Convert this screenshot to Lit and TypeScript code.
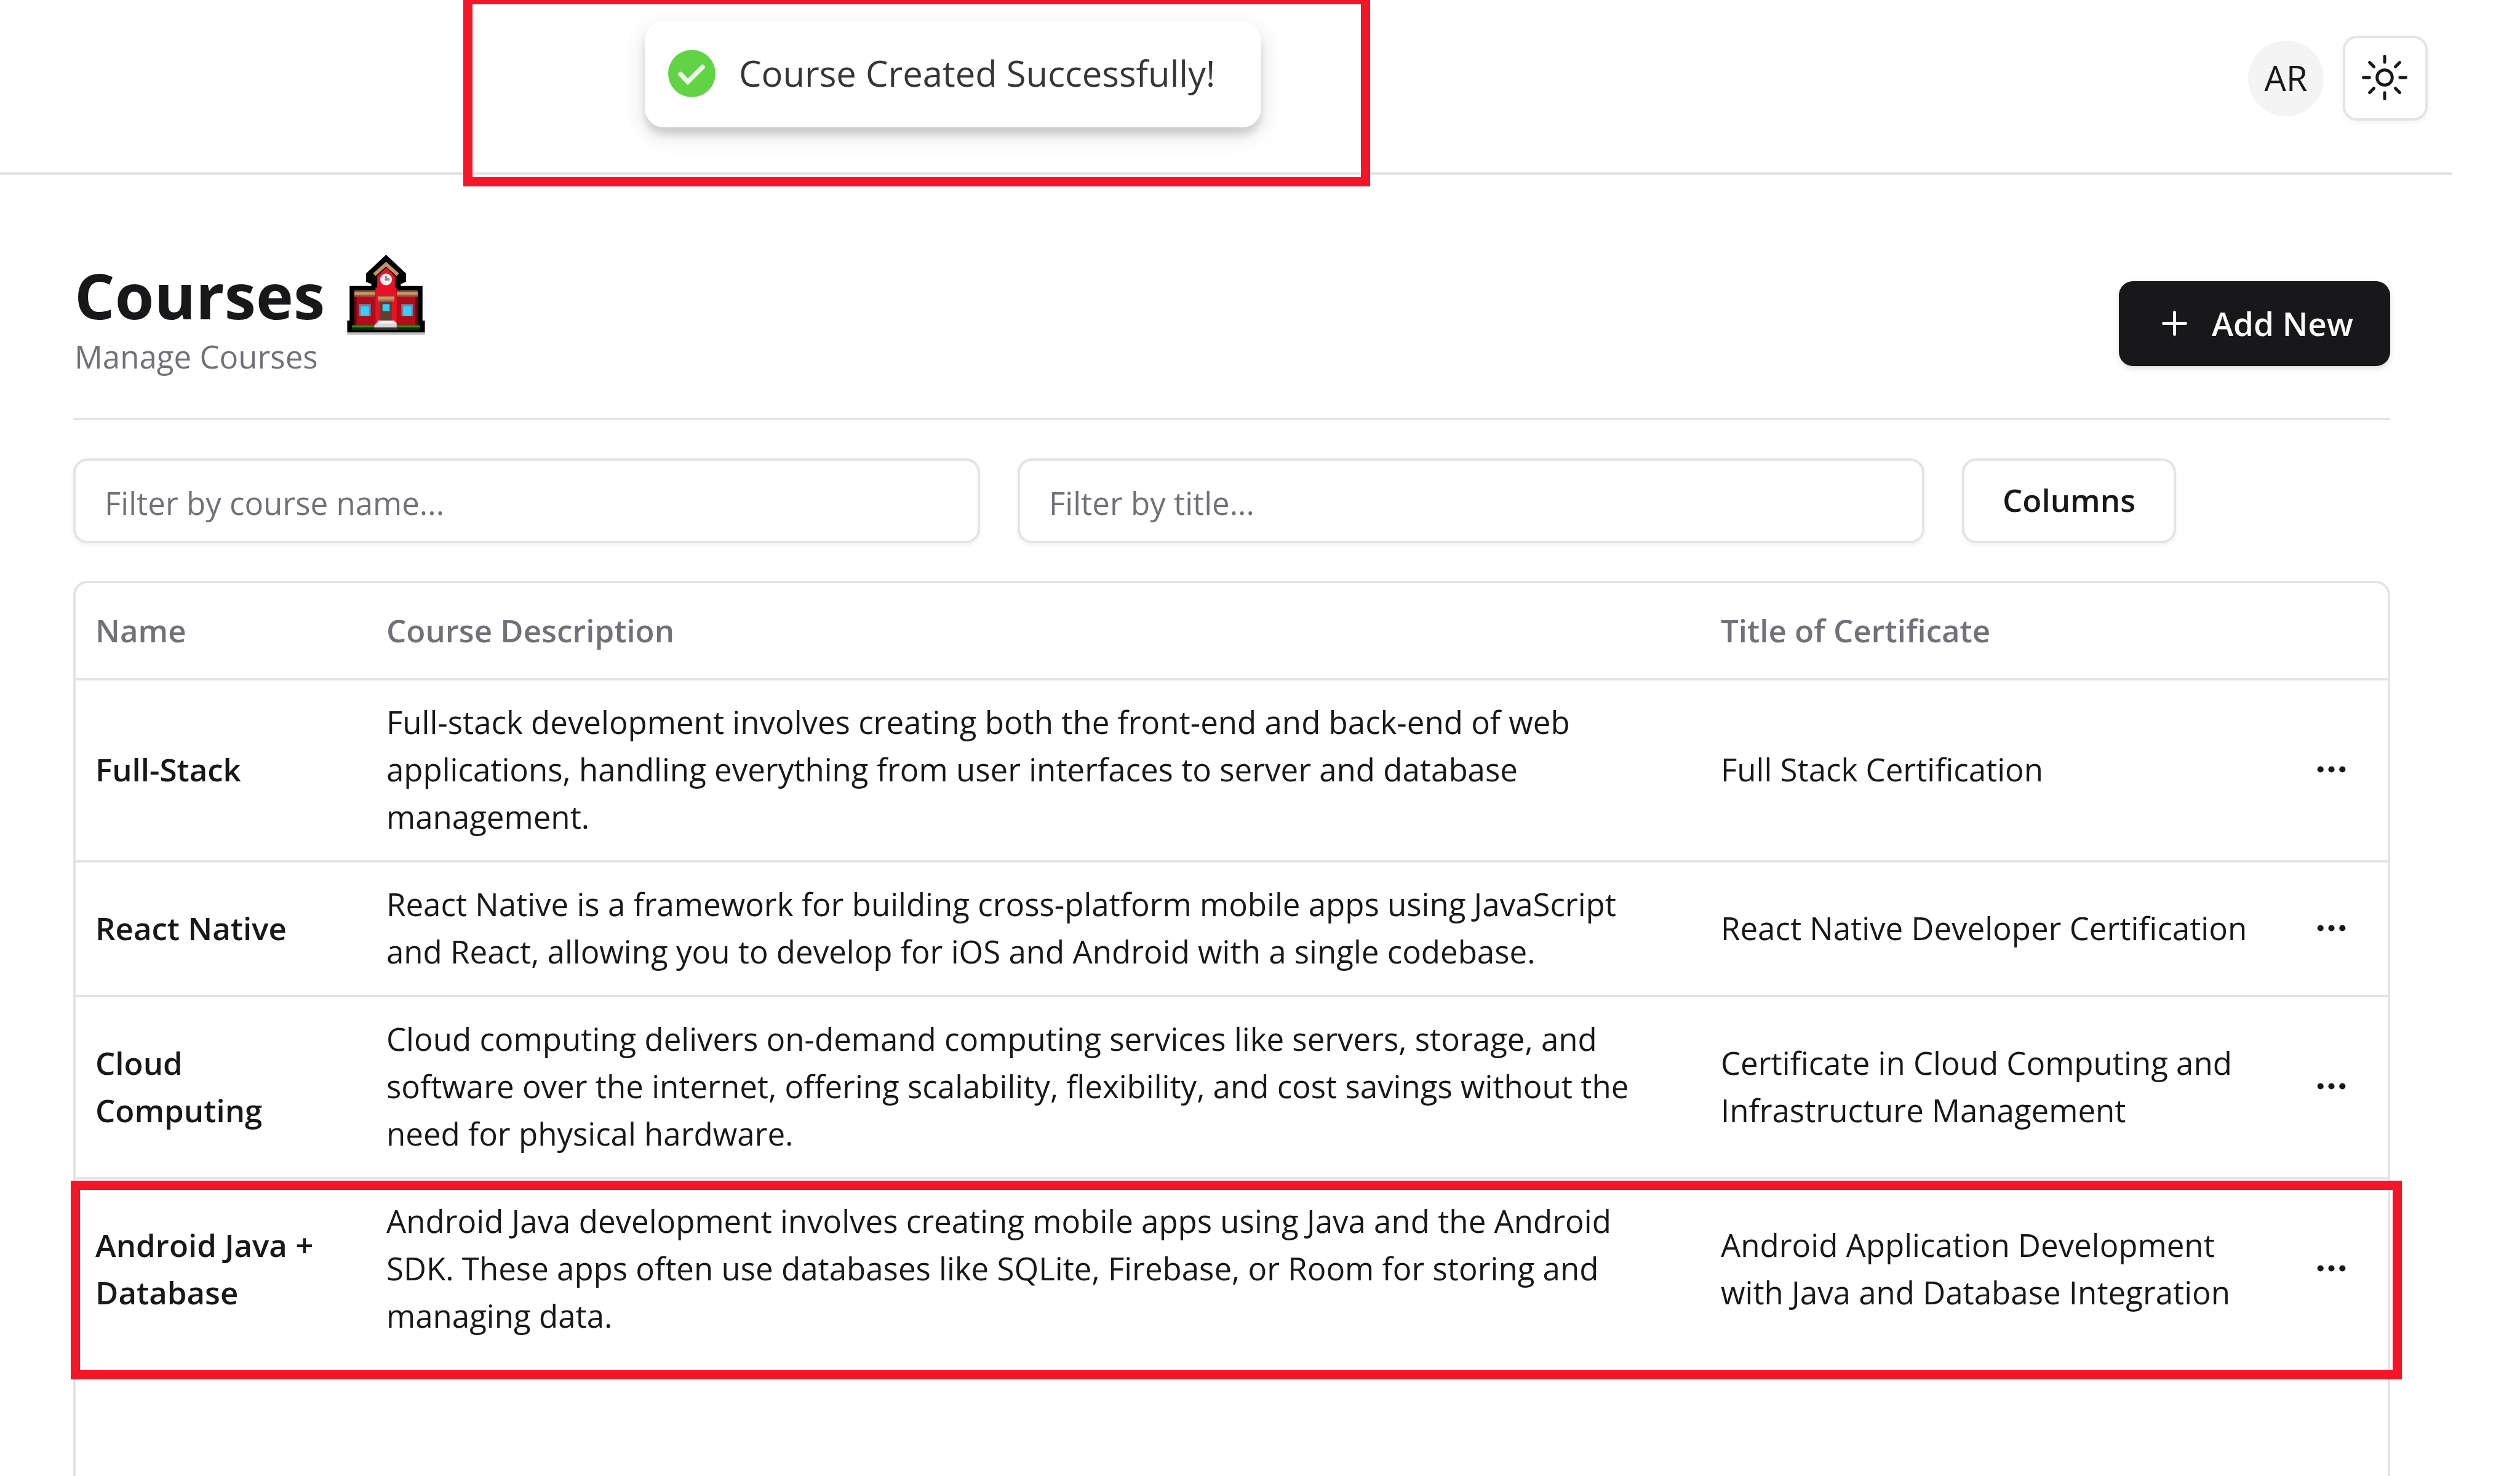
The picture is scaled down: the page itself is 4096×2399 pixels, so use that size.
import { LitElement, html, css, svg } from 'lit';
import { customElement, state } from 'lit/decorators.js';

interface Course {
  name: string;
  description: string;
  certificate: string;
}

const COURSES: Course[] = [
  {
    name: 'Full-Stack',
    description:
      'Full-stack development involves creating both the front-end and back-end of web applications, handling everything from user interfaces to server and database management.',
    certificate: 'Full Stack Certification',
  },
  {
    name: 'React Native',
    description:
      'React Native is a framework for building cross-platform mobile apps using JavaScript and React, allowing you to develop for iOS and Android with a single codebase.',
    certificate: 'React Native Developer Certification',
  },
  {
    name: 'Cloud Computing',
    description:
      'Cloud computing delivers on-demand computing services like servers, storage, and software over the internet, offering scalability, flexibility, and cost savings without the need for physical hardware.',
    certificate: 'Certificate in Cloud Computing and Infrastructure Management',
  },
  {
    name: 'Android Java + Database',
    description:
      'Android Java development involves creating mobile apps using Java and the Android SDK. These apps often use databases like SQLite, Firebase, or Room for storing and managing data.',
    certificate: 'Android Application Development with Java and Database Integration',
  },
];

const RAYS = [0, 45, 90, 135, 180, 225, 270, 315];

const sunIcon = html`<svg class="sun" viewBox="0 0 15 15" fill="none" stroke="currentColor" aria-hidden="true">
  <circle cx="7.5" cy="7.5" r="2.5" />
  ${RAYS.map(
    (angle) => svg`<path stroke-linecap="round" transform=${`rotate(${angle} 7.5 7.5)`} d="M7.5 0.5v2" />`,
  )}
</svg>`;

const plusIcon = html`<svg class="plus" viewBox="0 0 24 24" fill="none" stroke="currentColor" stroke-width="2" stroke-linecap="round" aria-hidden="true">
  <path d="M5 12h14M12 5v14" />
</svg>`;

const dotsIcon = html`<svg class="dots" viewBox="0 0 24 24" fill="currentColor" aria-hidden="true">
  <circle cx="5" cy="12" r="2" /><circle cx="12" cy="12" r="2" /><circle cx="19" cy="12" r="2" />
</svg>`;

const checkIcon = html`<svg class="check" viewBox="0 0 80 80" fill="none" aria-hidden="true">
  <circle cx="40" cy="40" r="40" fill="#61d345" />
  <path d="M21 41 33 54 58 29" stroke="#fff" stroke-opacity="0.88" stroke-width="8" stroke-linecap="round" />
</svg>`;

const schoolIcon = html`<svg class="school" viewBox="0 0 132 136" role="img" aria-label="School">
  <rect y="132" width="132" height="4" fill="#bfbfbf" />
  <path d="M66 0 100 32V46L91 50V53H128V112H132V132H0V112H4V53H41V50L32 46V32Z" fill="#000" />
  <path d="M12 62H48V68H12ZM84 62H120V68H84Z" fill="#c0956a" />
  <path d="M12 60H48V63H12ZM84 60H120V63H84Z" fill="#5f4a32" />
  <path d="M12 68H48V72H12ZM84 68H120V72H84Z" fill="#b84a3c" />
  <path d="M12 72H120V120H12Z" fill="#b00d1a" />
  <path d="M12 72H16V120H12ZM116 72H120V120H116Z" fill="#6a0811" />
  <path d="M66 22 81 36V56H84V118H48V56H51V36Z" fill="#e81224" />
  <path d="M46 34 66 16 86 34" fill="none" stroke="#c0956a" stroke-width="6" />
  <circle cx="66" cy="42" r="10" fill="#f2f2f2" />
  <path d="M64 36H68V40H72V44H64Z" fill="#8d8d8d" />
  <path d="M52 70H80V80H52Z" fill="#b0684a" />
  <path d="M52 72H80V76H52Z" fill="#c8966c" />
  <path d="M56 80H76V112H56Z" fill="#653d2f" />
  <path d="M60 84H72V96H60Z" fill="#30cdf5" />
  <path d="M20 84H40V104H20ZM92 84H112V104H92Z" fill="#7b7c9c" />
  <path d="M23 88H37V104H23ZM95 88H109V104H95Z" fill="#30d2fa" />
  <path d="M8 120H124V124H8Z" fill="#2b930d" />
  <path d="M8 124H124V128H8Z" fill="#04310a" />
  <path d="M52 112H80L84 116V124H46V120L52 114Z" fill="#d8d8d8" />
  <path d="M52 112H80V117H52Z" fill="#f1f1f1" />
  <path d="M46 124H86V128H46Z" fill="#333" />
</svg>`;

@customElement('app-root')
export class AppRoot extends LitElement {
  static styles = css`
    :host {
      display: block;
      color: #18181b;
      background: #fff;
      font-family: 'Open Sans', 'Noto Sans', sans-serif;
      font-size: 51px;
      line-height: 77px;
    }
    *,
    *::before {
      box-sizing: border-box;
    }
    button,
    input {
      margin: 0;
      font: inherit;
      color: inherit;
    }
    button {
      cursor: pointer;
    }
    svg {
      display: block;
      flex: none;
    }
    .page {
      position: relative;
      display: flex;
      flex-direction: column;
      height: 100vh;
      overflow: hidden;
      padding-right: 111px;
    }
    .topbar {
      flex: none;
      display: flex;
      align-items: flex-start;
      justify-content: flex-end;
      gap: 31px;
      height: 284px;
      padding: 58px 39px 0 0;
      border-bottom: 4px solid #e4e4e7;
    }
    .avatar {
      display: grid;
      place-items: center;
      width: 123px;
      height: 123px;
      margin-top: 8px;
      padding: 0 0 3px;
      border: 0;
      border-radius: 50%;
      background: #f4f4f5;
      font-size: 56px;
    }
    .outline {
      height: 138px;
      border: 4px solid #e4e4e7;
      border-radius: 23px;
      background: #fff;
      box-shadow: 0 4px 8px rgba(0, 0, 0, 0.05);
    }
    .theme {
      display: grid;
      place-items: center;
      width: 138px;
      padding: 0 2px 2px 0;
    }
    .sun {
      width: 74px;
      height: 74px;
    }
    .main {
      flex: 1;
      min-height: 0;
      display: flex;
      flex-direction: column;
      padding: 130px 100px 0 119px;
    }
    .heading {
      display: flex;
      align-items: center;
      justify-content: space-between;
      padding-bottom: 42px;
      border-bottom: 4px solid #e4e4e7;
    }
    .titles {
      padding: 0 0 22px 2px;
    }
    .title {
      display: flex;
      align-items: center;
      gap: 36px;
      margin: 0;
      font-size: 103px;
      line-height: 126px;
      font-weight: 700;
    }
    .school {
      width: 127px;
      height: 130px;
    }
    .subtitle {
      margin: 0;
      line-height: 71px;
      color: #71717a;
    }
    .add {
      display: flex;
      align-items: center;
      gap: 30px;
      height: 138px;
      padding: 0 60px;
      border: 0;
      border-radius: 23px;
      background: #18181b;
      color: #fafafa;
      font-size: 53px;
      font-weight: 600;
      box-shadow: 0 4px 12px rgba(0, 0, 0, 0.1), 0 4px 8px -4px rgba(0, 0, 0, 0.1);
    }
    .plus,
    .dots {
      width: 61px;
      height: 61px;
    }
    .filters {
      display: flex;
      gap: 61px;
      padding: 62px 0 61px;
    }
    .filter {
      flex: 0 1 1474px;
      min-width: 0;
      padding: 6px 47px 0;
    }
    .filter::placeholder {
      color: #71717a;
      opacity: 1;
    }
    .columns {
      padding: 0 62px 3px;
      font-weight: 600;
    }
    .card {
      flex: 1;
      min-height: 0;
      border: 4px solid #e4e4e7;
      border-bottom: 0;
      border-radius: 23px 23px 0 0;
    }
    .table {
      width: 100%;
      table-layout: fixed;
      border-collapse: separate;
      border-spacing: 0;
    }
    .name-col {
      width: 473px;
    }
    .cert-col {
      width: 931px;
    }
    .action-col {
      width: 185px;
    }
    .th {
      height: 158px;
      padding: 0 28px 2px 32px;
      border-bottom: 4px solid #e4e4e7;
      text-align: left;
      font-weight: 600;
      color: #71717a;
    }
    .td {
      padding: 29px 28px 32px 32px;
      border-bottom: 4px solid #e4e4e7;
      text-align: left;
      font-weight: 400;
      vertical-align: middle;
    }
    .name {
      font-weight: 600;
    }
    .description {
      padding-right: 64px;
    }
    .row:last-child .td {
      border-bottom: 0;
    }
    .more {
      display: grid;
      place-items: center;
      width: 123px;
      height: 123px;
      padding: 0;
      border: 0;
      border-radius: 23px;
      background: none;
    }
    .mark {
      position: absolute;
      border: 15px solid #f51428;
      pointer-events: none;
    }
    .mark-toast {
      left: 753px;
      top: -8px;
      width: 1474px;
      height: 311px;
    }
    .mark-row {
      left: 115px;
      right: 192px;
      top: 1919px;
      height: 323px;
    }
    .toast {
      position: absolute;
      left: 1048px;
      top: 35px;
      display: flex;
      align-items: center;
      padding: 29px 38px 33px;
      border-radius: 31px;
      background: #fff;
      color: #363636;
      font-size: 58px;
      line-height: 80px;
      box-shadow: 0 12px 38px rgba(0, 0, 0, 0.13), 0 12px 12px rgba(0, 0, 0, 0.12);
    }
    .check {
      width: 77px;
      height: 77px;
    }
    .message {
      margin: 15px 37px 15px 38px;
      white-space: nowrap;
    }
  `;

  @state() private nameFilter = '';
  @state() private titleFilter = '';

  private get rows() {
    const name = this.nameFilter.toLowerCase();
    const title = this.titleFilter.toLowerCase();
    return COURSES.filter(
      (c) => c.name.toLowerCase().includes(name) && c.certificate.toLowerCase().includes(title),
    );
  }

  render() {
    return html`
      <div class="page">
        <header class="topbar">
          <button class="avatar" type="button">AR</button>
          <button class="outline theme" type="button" aria-label="Toggle theme">${sunIcon}</button>
        </header>

        <main class="main">
          <div class="heading">
            <div class="titles">
              <h1 class="title">Courses ${schoolIcon}</h1>
              <p class="subtitle">Manage Courses</p>
            </div>
            <button class="add" type="button">${plusIcon}Add New</button>
          </div>

          <div class="filters">
            <input
              class="outline filter"
              type="text"
              aria-label="Filter by course name"
              placeholder="Filter by course name..."
              @input=${(e: Event) => (this.nameFilter = (e.target as HTMLInputElement).value)}
            />
            <input
              class="outline filter"
              type="text"
              aria-label="Filter by title"
              placeholder="Filter by title..."
              @input=${(e: Event) => (this.titleFilter = (e.target as HTMLInputElement).value)}
            />
            <button class="outline columns" type="button">Columns</button>
          </div>

          <div class="card">
            <table class="table">
              <thead>
                <tr>
                  <th class="th name-col" scope="col">Name</th>
                  <th class="th" scope="col">Course Description</th>
                  <th class="th cert-col" scope="col">Title of Certificate</th>
                  <th class="th action-col" scope="col" aria-label="Actions"></th>
                </tr>
              </thead>
              <tbody>
                ${this.rows.map(
                  (c) => html`<tr class="row">
                    <th class="td name" scope="row">${c.name}</th>
                    <td class="td description">${c.description}</td>
                    <td class="td">${c.certificate}</td>
                    <td class="td">
                      <button class="more" type="button" aria-label="Open menu">${dotsIcon}</button>
                    </td>
                  </tr>`,
                )}
              </tbody>
            </table>
          </div>
        </main>

        <div class="mark mark-row"></div>
        <div class="mark mark-toast"></div>
        <div class="toast" role="status">
          ${checkIcon}
          <span class="message">Course Created Successfully!</span>
        </div>
      </div>
    `;
  }
}
